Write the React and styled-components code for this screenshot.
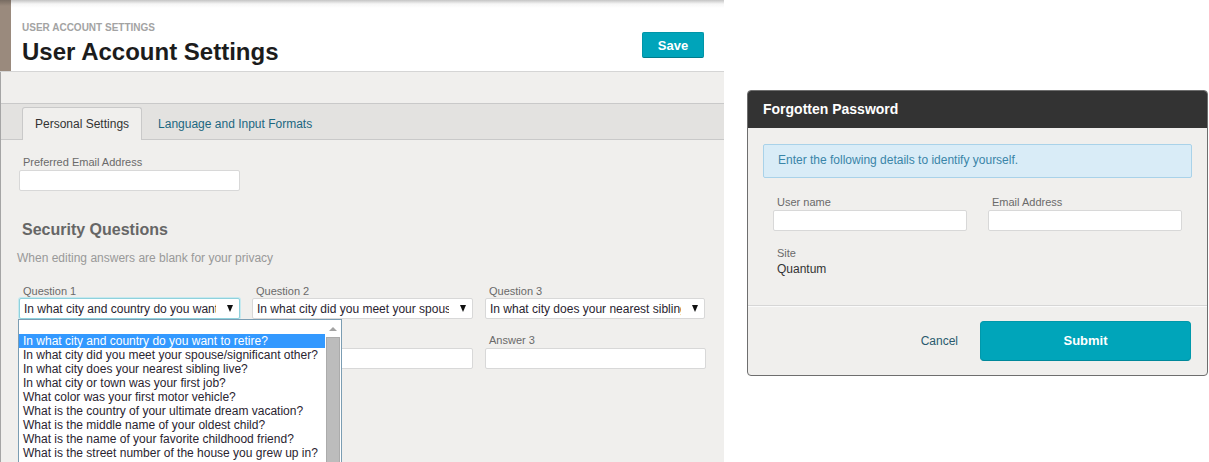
import React from "react";
import styled, { createGlobalStyle } from "styled-components";

const questions = [
  "In what city and country do you want to retire?",
  "In what city did you meet your spouse/significant other?",
  "In what city does your nearest sibling live?",
  "In what city or town was your first job?",
  "What color was your first motor vehicle?",
  "What is the country of your ultimate dream vacation?",
  "What is the middle name of your oldest child?",
  "What is the name of your favorite childhood friend?",
  "What is the street number of the house you grew up in?",
];

const picked = [questions[0], questions[1], questions[2]];

function App() {
  return (
    <>
      <GlobalStyle />
      <Screen>
        <SettingsPage>
          <PageHeader>
            <AccentStrip />
            <HeaderMain>
              <div>
                <Breadcrumb>User Account Settings</Breadcrumb>
                <PageTitle>User Account Settings</PageTitle>
              </div>
              <SaveButton>Save</SaveButton>
            </HeaderMain>
          </PageHeader>

          <PageBody>
            <Band />
            <TabBar>
              <Tab $active>Personal Settings</Tab>
              <Tab>Language and Input Formats</Tab>
            </TabBar>

            <Content>
              <FieldLabel>Preferred Email Address</FieldLabel>
              <TextInput readOnly />

              <SectionTitle>Security Questions</SectionTitle>
              <Hint>When editing answers are blank for your privacy</Hint>

              <FieldGrid>
                {picked.map((q, i) => (
                  <Field key={i}>
                    <FieldLabel>Question {i + 1}</FieldLabel>
                    <SelectBox $focused={i === 0}>
                      <SelectText>{q}</SelectText>
                      <SelectArrow />
                    </SelectBox>
                    {i === 0 && (
                      <Dropdown>
                        <OptionList>
                          <OptionRow />
                          {questions.map((item, j) => (
                            <OptionRow key={j} $selected={j === 0}>
                              {item}
                            </OptionRow>
                          ))}
                        </OptionList>
                        <Scrollbar>
                          <ScrollArrow />
                          <ScrollThumb />
                        </Scrollbar>
                      </Dropdown>
                    )}
                  </Field>
                ))}
              </FieldGrid>

              <FieldGrid $gapTop={15}>
                {[1, 2, 3].map((n) => (
                  <Field key={n}>
                    <FieldLabel>Answer {n}</FieldLabel>
                    <TextInput readOnly />
                  </Field>
                ))}
              </FieldGrid>
            </Content>
          </PageBody>
        </SettingsPage>

        <DialogArea>
          <Dialog>
            <DialogHeader>Forgotten Password</DialogHeader>
            <DialogBody>
              <InfoBox>Enter the following details to identify yourself.</InfoBox>
              <FormGrid>
                <div>
                  <FieldLabel>User name</FieldLabel>
                  <TextInput readOnly />
                </div>
                <div>
                  <FieldLabel>Email Address</FieldLabel>
                  <TextInput readOnly />
                </div>
              </FormGrid>
              <SiteLabel>Site</SiteLabel>
              <SiteValue>Quantum</SiteValue>
            </DialogBody>
            <DialogFooter>
              <CancelLink>Cancel</CancelLink>
              <SubmitButton>Submit</SubmitButton>
            </DialogFooter>
          </Dialog>
        </DialogArea>
      </Screen>
    </>
  );
}

export default App;

const GlobalStyle = createGlobalStyle`
  * {
    box-sizing: border-box;
  }

  body {
    margin: 0;
    background: #fff;
    font-family: "Liberation Sans", Arial, sans-serif;
  }
`;

const Screen = styled.div`
  width: 1209px;
  height: 462px;
  display: flex;
  overflow: hidden;
`;

const SettingsPage = styled.div`
  width: 724px;
  flex: none;
  height: 100%;
  display: flex;
  flex-direction: column;
  background-color: #f0efed;
  overflow: hidden;
`;

const PageHeader = styled.div`
  height: 72px;
  display: flex;
  border-bottom: 1px solid #d5d5d5;
`;

const AccentStrip = styled.div`
  width: 11px;
  background: linear-gradient(#776b61 0, #9a8a7d 6px);
`;

const HeaderMain = styled.div`
  flex: 1;
  display: flex;
  align-items: flex-start;
  justify-content: space-between;
  padding: 22px 20px 0 11px;
  background: linear-gradient(#c4c4c4 0, #f6f6f6 4px, #fff 8px);
`;

const Breadcrumb = styled.div`
  font-size: 10px;
  line-height: 12px;
  font-weight: bold;
  text-transform: uppercase;
  color: #a3a3a3;
`;

const PageTitle = styled.h1`
  margin: 4px 0 0;
  font-size: 24px;
  line-height: 28px;
  font-weight: bold;
  color: #1c1c1c;
`;

const SaveButton = styled.button`
  margin-top: 10px;
  width: 62px;
  height: 26px;
  border: 1px solid #0095a8;
  border-bottom-color: #007c8c;
  border-radius: 2px;
  background-color: #00a4ba;
  color: #fff;
  font-family: inherit;
  font-size: 13px;
  font-weight: bold;
  padding: 0;
`;

const PageBody = styled.div`
  flex: 1;
  display: flex;
  flex-direction: column;
  border-left: 1px solid #a5a5a5;
`;

const Band = styled.div`
  height: 32px;
  border-bottom: 1px solid #c9c9c9;
`;

const TabBar = styled.div`
  display: flex;
  padding: 3px 0 0 21px;
  background-color: #e3e2e0;
  border-bottom: 1px solid #c9c9c9;
`;

const Tab = styled.div`
  position: relative;
  height: 33px;
  margin-bottom: -1px;
  display: flex;
  align-items: center;
  padding: 0 ${(p) => (p.$active ? "12px" : "15px")};
  font-size: 12px;
  color: ${(p) => (p.$active ? "#333" : "#1b6780")};
  background-color: ${(p) => (p.$active ? "#f0efed" : "transparent")};
  border: 1px solid ${(p) => (p.$active ? "#c9c9c9" : "transparent")};
  border-bottom: none;
  border-radius: 3px 3px 0 0;
`;

const Content = styled.div`
  flex: 1;
  padding: 16px 0 0 18px;
`;

const FieldLabel = styled.div`
  margin-left: 4px;
  font-size: 11px;
  line-height: 13px;
  color: #6a6a6a;
`;

const TextInput = styled.input`
  display: block;
  width: 221px;
  height: 21px;
  margin: 1px 0 0;
  padding: 0 4px;
  border: 1px solid #d8d8d8;
  border-radius: 2px;
  background-color: #fff;
  font-family: inherit;
  font-size: 12px;
  outline: none;
`;

const SectionTitle = styled.h2`
  margin: 29px 0 0 3px;
  font-size: 16px;
  line-height: 19px;
  font-weight: bold;
  color: #666;
`;

const Hint = styled.div`
  margin: 12px 0 0 -2px;
  font-size: 12px;
  line-height: 14px;
  color: #999;
`;

const FieldGrid = styled.div`
  display: grid;
  grid-template-columns: 221px 221px 220px;
  column-gap: 12px;
  margin-top: ${(p) => p.$gapTop ?? 20}px;
`;

const Field = styled.div`
  position: relative;
`;

const SelectBox = styled.div`
  height: 21px;
  display: flex;
  align-items: center;
  padding: 0 6px 0 4px;
  background-color: #fff;
  border: 1px solid ${(p) => (p.$focused ? "#8fd1dc" : "#d8d8d8")};
  box-shadow: ${(p) => (p.$focused ? "0 0 0 1px #c6e9ef" : "none")};
  border-radius: 2px;
  font-size: 12px;
  color: #2a2430;
`;

const SelectText = styled.span`
  flex: 1;
  overflow: hidden;
  white-space: nowrap;
`;

const SelectArrow = styled.span`
  flex: none;
  margin-left: 11px;
  width: 0;
  height: 0;
  border-left: 3.5px solid transparent;
  border-right: 3.5px solid transparent;
  border-top: 7px solid #111;
`;

const Dropdown = styled.div`
  position: absolute;
  z-index: 10;
  left: -1px;
  top: 100%;
  width: 324px;
  height: 170px;
  display: flex;
  background-color: #fff;
  border: 1px solid #7b9db3;
`;

const OptionList = styled.div`
  flex: 1;
`;

const OptionRow = styled.div`
  height: 14px;
  padding-left: 4px;
  font-size: 12px;
  line-height: 14px;
  white-space: nowrap;
  color: ${(p) => (p.$selected ? "#fff" : "#2a2430")};
  background-color: ${(p) => (p.$selected ? "#3399ff" : "transparent")};
`;

const Scrollbar = styled.div`
  width: 16px;
  display: flex;
  flex-direction: column;
  align-items: center;
  padding-top: 7px;
`;

const ScrollArrow = styled.span`
  width: 0;
  height: 0;
  border-left: 4px solid transparent;
  border-right: 4px solid transparent;
  border-bottom: 4px solid #a3a3a3;
`;

const ScrollThumb = styled.div`
  flex: 1;
  width: 14px;
  margin-top: 6px;
  background-color: #bcbcbc;
  border: 1px solid #ababab;
`;

const DialogArea = styled.div`
  flex: 1;
  padding: 90px 0 0 23px;
`;

const Dialog = styled.div`
  width: 461px;
  height: 286px;
  display: flex;
  flex-direction: column;
  background-color: #f0efed;
  border: 1px solid #6e6e6e;
  border-radius: 4px;
  overflow: hidden;
`;

const DialogHeader = styled.div`
  height: 37px;
  padding-left: 15px;
  background-color: #333;
  color: #fff;
  font-size: 14px;
  line-height: 37px;
  font-weight: bold;
`;

const DialogBody = styled.div`
  height: 177px;
  padding: 16px 15px 0;
`;

const InfoBox = styled.div`
  height: 34px;
  padding: 8px 14px 0;
  background-color: #d9ecf7;
  border: 1px solid #a9d2e9;
  border-radius: 2px;
  font-size: 12px;
  line-height: 14px;
  color: #3a85a8;
`;

const FormGrid = styled.div`
  display: grid;
  grid-template-columns: 194px 194px;
  column-gap: 21px;
  margin: 18px 0 0 10px;

  input {
    width: 194px;
  }
`;

const SiteLabel = styled(FieldLabel)`
  margin: 16px 0 0 14px;
`;

const SiteValue = styled.div`
  margin: 2px 0 0 14px;
  font-size: 12px;
  line-height: 14px;
  color: #333;
`;

const DialogFooter = styled.div`
  flex: 1;
  display: flex;
  align-items: center;
  justify-content: flex-end;
  column-gap: 22px;
  padding-right: 16px;
  border-top: 1px solid #d6d6d6;
  box-shadow: inset 0 1px 0 #fafafa;
`;

const CancelLink = styled.span`
  font-size: 12px;
  color: #2a5a6e;
`;

const SubmitButton = styled.button`
  width: 211px;
  height: 40px;
  padding: 0;
  border: 1px solid #0098ab;
  border-bottom-color: #00889a;
  border-radius: 4px;
  background-color: #00a5ba;
  color: #fff;
  font-family: inherit;
  font-size: 13px;
  font-weight: bold;
`;
